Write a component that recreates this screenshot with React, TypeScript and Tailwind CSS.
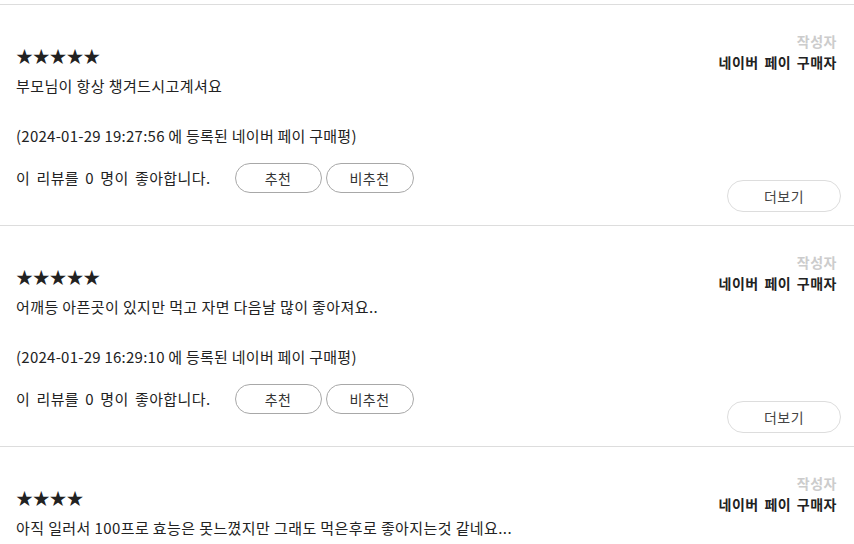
import React from 'react'

type Review = {
  stars: number
  text: string
  date?: string
  full: boolean
}

const reviews: Review[] = [
  { stars: 5, text: '부모님이 항상 챙겨드시고계셔요', date: '2024-01-29 19:27:56', full: true },
  { stars: 5, text: '어깨등 아픈곳이 있지만 먹고 자면 다음날 많이 좋아져요..', date: '2024-01-29 16:29:10', full: true },
  { stars: 4, text: '아직 일러서 100프로 효능은 못느꼈지만 그래도 먹은후로 좋아지는것 같네요...', full: false },
]

function ReviewItem({ review }: { review: Review }) {
  return (
    <div className="flex border-t border-[#dddddd] h-[221px] pl-4 pr-[13px]">
      {/* ── Left: rating + body ── */}
      <div className="flex-1 flex flex-col">
        <div className="mt-[39px] h-6 leading-6 text-[17px] text-[#222] tracking-[-0.2px]">
          {'★'.repeat(review.stars)}
        </div>
        <p className="mt-[8px] h-5 leading-5 text-[15px] tracking-[0.4px] text-[#222]">{review.text}</p>
        {review.full && (
          <>
            <p className="mt-[30px] h-5 leading-5 text-[15px] tracking-[0.25px] text-[#222]">
              ({review.date} 에 등록된 네이버 페이 구매평)
            </p>
            <div className="mt-[17px] flex items-center h-[30px]">
              <span className="text-[15px] tracking-[0.4px] [word-spacing:2.5px] text-[#222] mr-[24px]">
                이 리뷰를 0 명이 좋아합니다.
              </span>
              <button className="w-[87px] h-[30px] rounded-full border border-[#a8a8a8] text-[14px] tracking-[0.5px] text-[#333]">
                추천
              </button>
              <button className="ml-[4px] w-[88px] h-[30px] rounded-full border border-[#a8a8a8] text-[14px] tracking-[0.5px] text-[#333]">
                비추천
              </button>
            </div>
          </>
        )}
      </div>

      {/* ── Right: author + more ── */}
      <div className="flex flex-col items-end">
        <div className="mt-[26px] pr-[4px] h-5 leading-5 text-[14px] tracking-[0.5px] font-bold text-[#cccccc]">
          작성자
        </div>
        <div className="mt-[1px] pr-[4px] h-5 leading-5 text-[14px] tracking-[0.5px] [word-spacing:2px] font-bold text-[#222]">
          네이버 페이 구매자
        </div>
        {review.full && (
          <button className="mt-auto mb-[13px] w-[114px] h-[32px] rounded-full border border-[#dddddd] text-[14px] tracking-[0.5px] text-[#444]">
            더보기
          </button>
        )}
      </div>
    </div>
  )
}

export default function App() {
  return (
    <div
      className="w-[854px] h-[544px] overflow-hidden bg-white pt-[4px]"
      style={{ fontFamily: '"Noto Sans CJK KR", "Noto Sans", sans-serif' }}
    >
      {reviews.map((r, i) => (
        <ReviewItem key={i} review={r} />
      ))}
    </div>
  )
}
